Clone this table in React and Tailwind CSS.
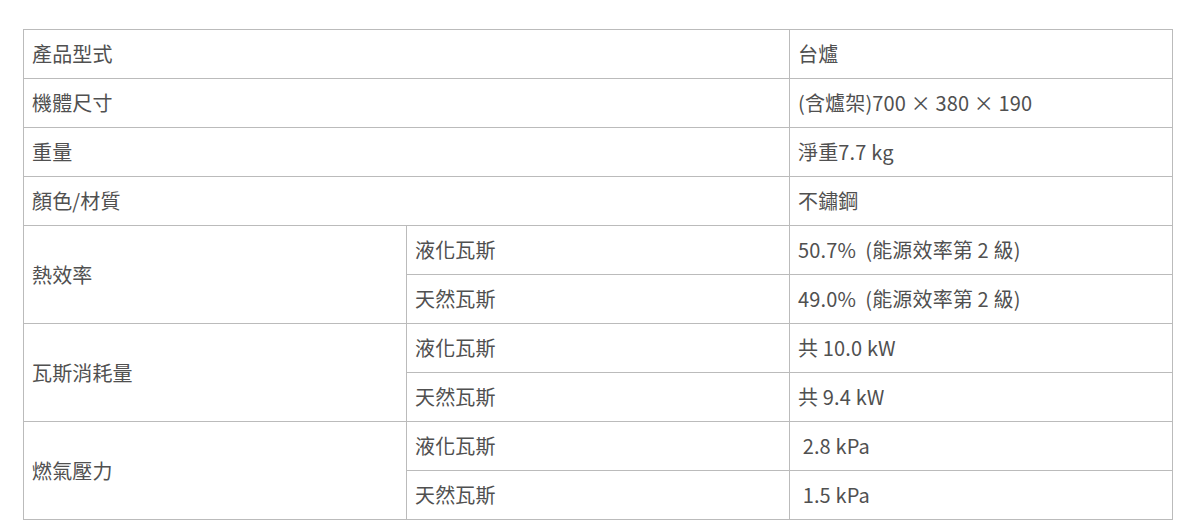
import React from 'react';

const rows = [
  { label: '產品型式', value: '台爐' },
  { label: '機體尺寸', value: '(含爐架)700 × 380 × 190' },
  { label: '重量', value: '淨重7.7 kg' },
  { label: '顏色/材質', value: '不鏽鋼' },
];

const groups = [
  {
    label: '熱效率',
    items: [
      ['液化瓦斯', '50.7%\u00a0 (能源效率第 2 級)'],
      ['天然瓦斯', '49.0%\u00a0 (能源效率第 2 級)'],
    ],
  },
  {
    label: '瓦斯消耗量',
    items: [
      ['液化瓦斯', '共 10.0 kW'],
      ['天然瓦斯', '共 9.4 kW'],
    ],
  },
  {
    label: '燃氣壓力',
    items: [
      ['液化瓦斯', '\u00a02.8 kPa'],
      ['天然瓦斯', '\u00a01.5 kPa'],
    ],
  },
];

const cell = 'border border-[#bbbbbb] h-[49px] pl-[8px] pr-[10px] align-middle';

export default function App() {
  return (
    <div className="bg-white w-[1200px] h-[528px] pt-[29px] pl-[23px]">
      <table
        className="w-[1150px] border-collapse table-fixed text-[20px] font-normal text-[#505050] tracking-[0.15px]"
        style={{ fontFamily: '"Noto Sans CJK TC", "Noto Sans", sans-serif' }}
      >
        <colgroup>
          <col className="w-[383px]" />
          <col className="w-[383px]" />
          <col className="w-[383px]" />
        </colgroup>
        <tbody>
          {rows.map((r) => (
            <tr key={r.label}>
              <td colSpan={2} className={cell}>{r.label}</td>
              <td className={cell}>{r.value}</td>
            </tr>
          ))}
          {groups.map((g) =>
            g.items.map(([k, v], i) => (
              <tr key={g.label + k}>
                {i === 0 && (
                  <td rowSpan={2} className={cell}>{g.label}</td>
                )}
                <td className={cell}>{k}</td>
                <td className={cell}>{v}</td>
              </tr>
            ))
          )}
        </tbody>
      </table>
    </div>
  );
}
